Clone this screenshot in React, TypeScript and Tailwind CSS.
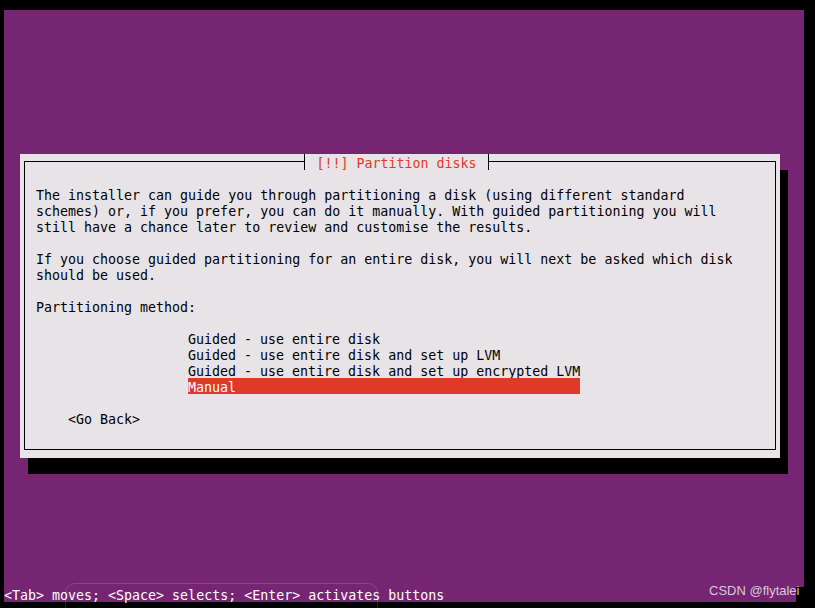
import type { FC, ReactNode } from "react";

const methods = [
  "Guided - use entire disk",
  "Guided - use entire disk and set up LVM",
  "Guided - use entire disk and set up encrypted LVM",
  "Manual",
];

const Line: FC<{ children?: ReactNode; className?: string }> = ({ children, className = "" }) => (
  <div className={`h-[16px] pt-[2px] ${className}`}>{children}</div>
);

const Dialog: FC = () => {
  return (
    <div className="relative ml-[16px] h-[304px] w-[760px] shrink-0 bg-[#e8e3e7] px-[4px] pt-[7px] shadow-[8px_16px_0_0_#000]">
      <div className="absolute left-[284px] top-0 flex h-[16px] w-[185px] items-center justify-center border-x border-black bg-[#e8e3e7] pt-[3px] text-[#df3a29]">
        [!!] Partition disks
      </div>
      <div className="flex h-[289px] flex-col border border-black pl-[11px] pt-[24px] text-black">
        <Line>The installer can guide you through partitioning a disk (using different standard</Line>
        <Line>schemes) or, if you prefer, you can do it manually. With guided partitioning you will</Line>
        <Line>still have a chance later to review and customise the results.</Line>
        <Line />
        <Line>If you choose guided partitioning for an entire disk, you will next be asked which disk</Line>
        <Line>should be used.</Line>
        <Line />
        <Line>Partitioning method:</Line>
        <Line />
        <div className="ml-[152px] flex w-[392px] flex-col">
          {methods.map((m, i) => (
            <Line key={m} className={i === 3 ? "bg-[#df3a29] text-white" : ""}>
              {m}
            </Line>
          ))}
        </div>
        <Line />
        <Line className="pl-[32px]">&lt;Go Back&gt;</Line>
      </div>
    </div>
  );
};

export default function App() {
  return (
    <div className="relative h-[608px] w-[815px] overflow-hidden bg-black pl-[4px] pt-[10px] font-['DejaVu_Sans_Mono','Liberation_Mono',monospace] text-[13.3px] leading-[16px] whitespace-pre">
      <div className="flex h-[592px] w-[800px] flex-col bg-[#762572] pt-[144px]">
        <Dialog />
        <Line className="mt-auto text-white">
          &lt;Tab&gt; moves; &lt;Space&gt; selects; &lt;Enter&gt; activates buttons
        </Line>
      </div>

      {/* screenshot leftovers: faint rounded overlay and watermark */}
      <div className="absolute left-[65px] top-[583px] h-[40px] w-[313px] rounded-[10px] border border-white/15" />
      <div className="absolute left-[796px] top-[587px] h-[15px] w-[8px] bg-black" />
      <div className="absolute left-[709px] top-[583px] font-['Liberation_Sans',Arial,sans-serif] text-[13px] leading-[16px] text-[#d9c9d8]">
        CSDN @flytalei
      </div>
    </div>
  );
}
